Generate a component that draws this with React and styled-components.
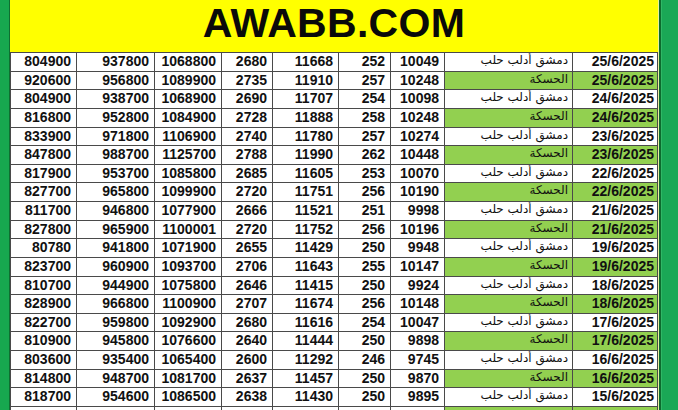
import React from "react";
import styled, { createGlobalStyle } from "styled-components";

const Global = createGlobalStyle`
  html, body { margin: 0; padding: 0; background: #fff; }
  body { font-family: "Liberation Sans", Arial, sans-serif; }
`;

const Page = styled.div`
  display: flex;
  width: 678px;
  height: 410px;
  overflow: hidden;
`;

const LeftBar = styled.div`
  width: 9px;
  flex: none;
  background: #17a84f;
  border-right: 1px solid #0e6f31;
`;

const RightBar = styled.div`
  width: 17px;
  flex: none;
  background: #1aa856;
  border-left: 2px solid #0d6b2e;
  box-shadow: inset 1px 0 0 #2fb866;
`;

const Gap = styled.div`
  width: 1px;
  flex: none;
  background: #e9f0a0;
`;

const Main = styled.div`
  width: 648px;
  flex: none;
  display: flex;
  flex-direction: column;
`;

const Header = styled.div`
  height: 52px;
  flex: none;
  background: #ffff00;
  display: flex;
  justify-content: center;
  align-items: flex-start;
`;

const Title = styled.h1`
  margin: 0;
  font-family: "Liberation Sans", Arial, sans-serif;
  font-weight: 700;
  font-size: 41px;
  line-height: 46px;
  color: #0a0a0a;
  letter-spacing: 0.3px;
`;

const Table = styled.div`
  display: flex;
  flex-direction: column;
  border-top: 1px solid #4a4a4a;
`;

const Row = styled.div`
  display: grid;
  grid-template-columns: 67px 78px 67px 51px 66px 52px 54px 128px 85px;
  height: 18.63px;
  flex: none;
`;

const Cell = styled.div`
  box-sizing: border-box;
  border-right: 1px solid #4a4a4a;
  border-bottom: 1px solid #4a4a4a;
  background: ${(p) => (p.$green ? "#92d050" : "#ffffff")};
  font-family: "Liberation Sans", Arial, sans-serif;
  font-weight: 700;
  font-size: 14px;
  line-height: 17px;
  color: #111;
  text-align: right;
  padding-right: ${(p) => p.$pad || 5}px;
  white-space: nowrap;
  overflow: hidden;
  &:first-child { border-left: 1px solid #4a4a4a; }
`;

const PlaceCell = styled(Cell)`
  font-family: "DejaVu Sans", sans-serif;
  font-weight: 400;
  font-size: 12px;
  line-height: 15px;
  direction: rtl;
  text-align: right;
  padding-right: 0;
  padding-left: 0;
  & > span { padding-right: 4px; display: inline-block; }
`;

const DAM = "دمشق أدلب حلب";
const HAS = "الحسكة";

const data = [
  ["804900", "937800", "1068800", "2680", "11668", "252", "10049", DAM, "25/6/2025"],
  ["920600", "956800", "1089900", "2735", "11910", "257", "10248", HAS, "25/6/2025"],
  ["804900", "938700", "1068900", "2690", "11707", "254", "10098", DAM, "24/6/2025"],
  ["816800", "952800", "1084900", "2728", "11888", "258", "10248", HAS, "24/6/2025"],
  ["833900", "971800", "1106900", "2740", "11780", "257", "10274", DAM, "23/6/2025"],
  ["847800", "988700", "1125700", "2788", "11990", "262", "10448", HAS, "23/6/2025"],
  ["817900", "953700", "1085800", "2685", "11605", "253", "10070", DAM, "22/6/2025"],
  ["827700", "965800", "1099900", "2720", "11751", "256", "10190", HAS, "22/6/2025"],
  ["811700", "946800", "1077900", "2666", "11521", "251", "9998", DAM, "21/6/2025"],
  ["827800", "965900", "1100001", "2720", "11752", "256", "10196", HAS, "21/6/2025"],
  ["80780", "941800", "1071900", "2655", "11429", "250", "9948", DAM, "19/6/2025"],
  ["823700", "960900", "1093700", "2706", "11643", "255", "10147", HAS, "19/6/2025"],
  ["810700", "944900", "1075800", "2646", "11415", "250", "9924", DAM, "18/6/2025"],
  ["828900", "966800", "1100900", "2707", "11674", "256", "10148", HAS, "18/6/2025"],
  ["822700", "959800", "1092900", "2680", "11616", "254", "10047", DAM, "17/6/2025"],
  ["810900", "945800", "1076600", "2640", "11444", "250", "9898", HAS, "17/6/2025"],
  ["803600", "935400", "1065400", "2600", "11292", "246", "9745", DAM, "16/6/2025"],
  ["814800", "948700", "1081700", "2637", "11457", "250", "9870", HAS, "16/6/2025"],
  ["818700", "954600", "1086500", "2638", "11430", "250", "9895", DAM, "15/6/2025"],
  ["", "", "", "", "", "", "", "", ""],
];

export default function App() {
  return (
    <>
      <Global />
      <Page>
        <LeftBar />
        <Main>
          <Header>
            <Title>AWABB.COM</Title>
          </Header>
          <Table>
            {data.map((r, i) => {
              const green = i % 2 === 1;
              return (
                <Row key={i}>
                  {r.slice(0, 7).map((v, j) => (
                    <Cell key={j}>{v}</Cell>
                  ))}
                  <PlaceCell $green={green}>
                    <span>{r[7]}</span>
                  </PlaceCell>
                  <Cell $green={green} $pad={3}>
                    {r[8]}
                  </Cell>
                </Row>
              );
            })}
          </Table>
        </Main>
        <Gap />
        <RightBar />
      </Page>
    </>
  );
}
